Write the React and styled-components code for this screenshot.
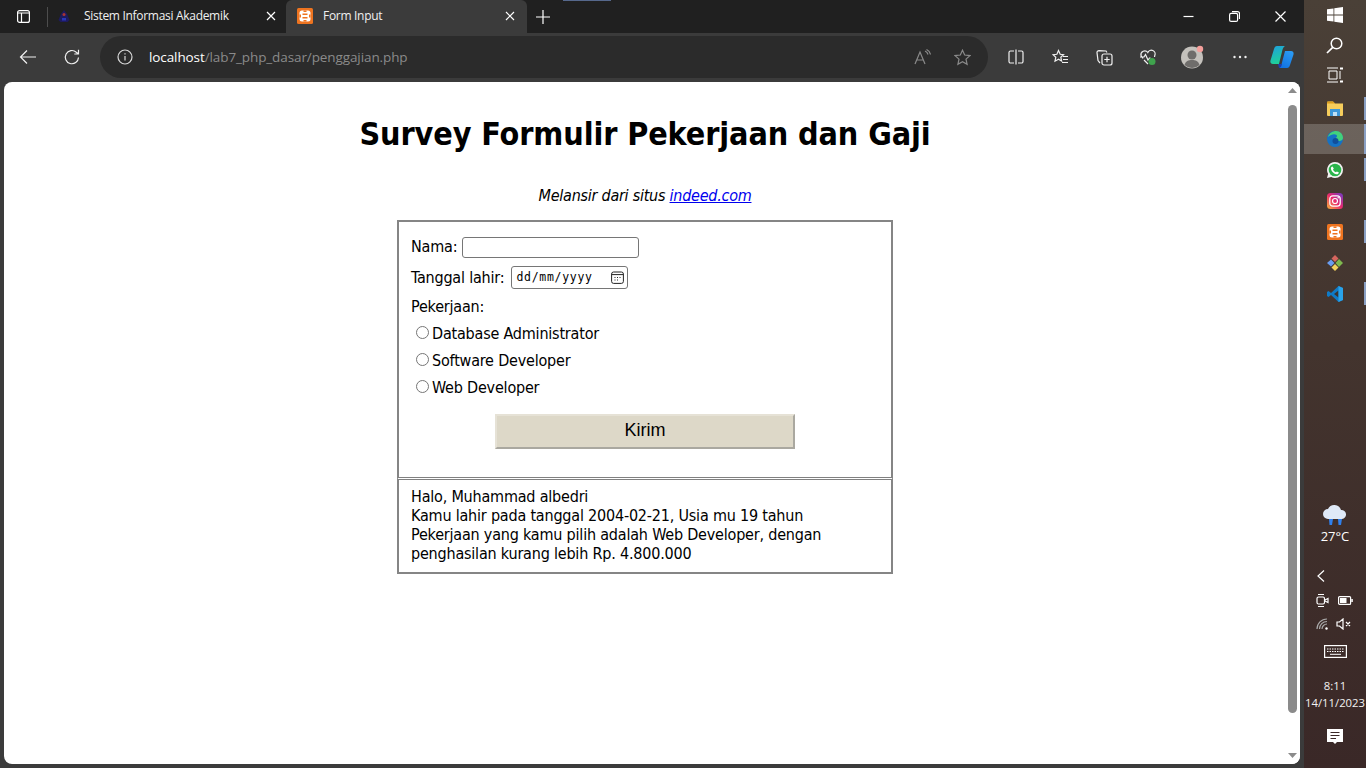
import React from "react";
import styled, { createGlobalStyle } from "styled-components";

const GlobalStyle = createGlobalStyle`
  html, body {
    margin: 0;
    padding: 0;
    height: 100%;
    overflow: hidden;
    background: #3b3b3b;
  }
  * { box-sizing: border-box; }
`;

const Screen = styled.div`
  width: 1366px;
  height: 768px;
  display: flex;
  overflow: hidden;
  font-family: "Open Sans", "Noto Sans", sans-serif;
`;

const Browser = styled.div`
  width: 1304px;
  display: flex;
  flex-direction: column;
  background: #3b3b3b;
`;

/* tab strip */
const TabStrip = styled.div`
  height: 33px;
  display: flex;
  align-items: center;
  background: #202020;
  color: #fff;
  position: relative;
`;

const SideButton = styled.div`
  width: 47px;
  height: 33px;
  padding-left: 17px;
  display: flex;
  align-items: center;
  svg { display: block; }
`;

const TabDivider = styled.div`
  width: 1px;
  height: 20px;
  background: #4d4d4d;
`;

const Tab = styled.div`
  width: ${(p) => p.$w}px;
  height: 33px;
  padding: 0 ${(p) => p.$pr}px 2px ${(p) => p.$pl}px;
  display: flex;
  align-items: center;
  font-size: 12px;
  letter-spacing: -0.3px;
  color: #f0f0f0;
  border-radius: 6px 6px 0 0;
  background: ${(p) => (p.$active ? "#3b3b3b" : "transparent")};
`;

const TabTitle = styled.span`
  margin-left: ${(p) => p.$ml}px;
  flex: 1;
  white-space: nowrap;
`;

const NewTab = styled.div`
  margin-left: 8px;
  display: flex;
`;

const WindowButtons = styled.div`
  margin-left: auto;
  display: flex;
  align-items: center;
  gap: 35px;
  padding-right: 18px;
`;

const TopMark = styled.div`
  position: absolute;
  left: 563px;
  top: 0;
  width: 48px;
  height: 1px;
  background: #56688c;
`;

/* toolbar */
const Toolbar = styled.div`
  height: 49px;
  padding: 0 0 1px 19px;
  display: flex;
  align-items: center;
  background: #3b3b3b;
`;

const NavIcon = styled.div`
  width: ${(p) => p.$w}px;
  flex-shrink: 0;
  display: flex;
  align-items: center;
`;

const AddressBar = styled.div`
  width: 888px;
  height: 42px;
  flex-shrink: 0;
  padding: 0 17px;
  display: flex;
  align-items: center;
  border-radius: 21px;
  background: #2b2b2b;
`;

const Url = styled.div`
  margin-left: 16px;
  flex: 1;
  font-size: 13.5px;
  letter-spacing: -0.1px;
  color: #8a8a8a;
`;

const Host = styled.span`
  color: #fff;
`;

const AddressIcons = styled.div`
  display: flex;
  align-items: center;
  gap: 23px;
`;

const ToolIcons = styled.div`
  display: flex;
  align-items: center;
  margin-left: 6px;
`;

const ToolSlot = styled.div`
  width: ${(p) => p.$w || 44}px;
  display: flex;
  justify-content: center;
`;

/* web page */
const Viewport = styled.div`
  flex: 1;
  margin: 0 4px 4px;
  display: flex;
  overflow: hidden;
  background: #fff;
  border-radius: 8px;
`;

const Page = styled.main`
  flex: 1;
  padding-left: 2px;
  color: #000;
  font-family: "DejaVu Sans", sans-serif;
  font-stretch: condensed;
  font-size: 16px;
  letter-spacing: -0.2px;
  text-align: center;
`;

const Title = styled.h1`
  margin: 33px 0 0;
  font-size: 32px;
  line-height: 39px;
  font-weight: bold;
  letter-spacing: -0.1px;
`;

const Subtitle = styled.p`
  margin: 32px 0 15px;
  font-style: italic;
  line-height: 19px;
  letter-spacing: -0.25px;
  a { color: #0000ee; }
`;

const Panel = styled.section`
  width: 496px;
  margin: 0 auto;
  padding: ${(p) => p.$pad};
  border: 2px solid #858585;
  text-align: left;
`;

const FormPanel = styled(Panel)`
  height: 257px;
  border-bottom: 0;
`;

const ResultPanel = styled(Panel)`
  height: 97px;
  border-top: 3px double #808080;
  line-height: 19px;
`;

const Field = styled.div`
  height: ${(p) => p.$h}px;
  display: flex;
  align-items: center;
`;

const NameField = styled(Field)`
  padding-bottom: 2px;
`;

const RadioRow = styled.label`
  height: 27px;
  padding-left: 5px;
  display: flex;
  align-items: center;
`;

const Radio = styled.span`
  width: 13px;
  height: 13px;
  margin: -2px 3px 0 0;
  border: 1px solid #767676;
  border-radius: 50%;
  background: #fff;
`;

const TextBox = styled.div`
  width: 177px;
  height: 21px;
  margin: 2px 0 0 5px;
  border: 1px solid #767676;
  border-radius: 3px;
`;

const DateBox = styled.div`
  width: 117px;
  height: 23px;
  margin-left: 7px;
  padding: 0 3px 0 4px;
  display: flex;
  align-items: center;
  justify-content: space-between;
  border: 1px solid #767676;
  border-radius: 3px;
  font-family: "DejaVu Sans Mono", monospace;
  font-stretch: normal;
  font-size: 11.5px;
  letter-spacing: 0.7px;
`;

const Submit = styled.button`
  display: block;
  width: 300px;
  height: 35px;
  margin: 13px auto 0;
  padding: 0 0 2px;
  border: 2px solid #e6e2d6;
  border-right-color: #aaa8a0;
  border-bottom-color: #aaa8a0;
  background: #ddd8c8;
  color: #000;
  font-family: "Liberation Sans", sans-serif;
  font-size: 18px;
`;

const Scrollbar = styled.div`
  width: 16px;
  display: flex;
  flex-direction: column;
  align-items: center;
  background: #fff;
`;

const ArrowBox = styled.div`
  height: 17px;
  display: flex;
  align-items: center;
  justify-content: center;
`;

const ThumbTrack = styled.div`
  flex: 1;
  padding: 6px 0 34px;
  display: flex;
`;

const Thumb = styled.div`
  width: 9px;
  background: #8b8b8b;
  border-radius: 5px;
`;

/* taskbar */
const Taskbar = styled.aside`
  width: 62px;
  display: flex;
  flex-direction: column;
  background: linear-gradient(180deg, #4a4037 0%, #43342e 45%, #3a2827 100%);
  color: #fff;
  font-family: "Open Sans", sans-serif;
  font-size: 12px;
  text-align: center;
`;

const SystemSlot = styled.div`
  height: 30px;
  padding-right: 1px;
  display: flex;
  align-items: center;
  justify-content: center;
`;

const AppList = styled.div`
  margin-top: 3px;
`;

const AppSlot = styled.div`
  height: ${(p) => (p.$active ? 30 : 31)}px;
  padding-right: 1px;
  display: flex;
  align-items: center;
  justify-content: center;
  position: relative;
  background: ${(p) => (p.$active ? "rgba(255,255,255,0.2)" : "transparent")};
  &::after {
    content: "";
    display: ${(p) => (p.$running ? "block" : "none")};
    position: absolute;
    right: 0;
    top: ${(p) => (p.$active ? 0 : 4)}px;
    bottom: ${(p) => (p.$active ? 0 : 4)}px;
    width: 2px;
    background: #8aa0c4;
  }
`;

const Weather = styled.div`
  margin-top: 196px;
  display: flex;
  flex-direction: column;
  align-items: center;
  font-size: 13px;
  line-height: 18px;
`;

const Tray = styled.div`
  margin-top: 19px;
  display: flex;
  flex-direction: column;
`;

const TrayRow = styled.div`
  height: 24px;
  padding-left: 12px;
  display: flex;
  align-items: center;
  gap: ${(p) => p.$gap || 0}px;
`;

const KeyboardRow = styled.div`
  height: 24px;
  margin-top: 3px;
  display: flex;
  align-items: center;
  justify-content: center;
`;

const Clock = styled.div`
  margin-top: 14px;
  font-size: 11.3px;
  line-height: 17px;
  color: #f2f2f2;
  white-space: nowrap;
`;

const NotifySlot = styled.div`
  margin-top: 18px;
  display: flex;
  justify-content: center;
`;

const stroke = { fill: "none", stroke: "currentColor", strokeWidth: 1.2 };

const Xampp = ({ size = 16 }) => (
  <svg width={size} height={size} viewBox="0 0 16 16">
    <rect width="16" height="16" rx="1.500" fill="#ee7420" />
    <rect x="2.500" y="2.500" width="11" height="11" rx="2.500" fill="#fff" />
    <path d="M6.500 2.500h3v1.500h-3zM6.500 12h3v1.500h-3zM2.500 6.500H4v3H2.500zM12 6.500h1.500v3H12z" fill="#ee7420" />
    <path d="M5.500 5.500h5v1.500h-5zM5.500 9h5v1.500h-5z" fill="#ee7420" />
  </svg>
);

export default function App() {
  return (
    <Screen>
      <GlobalStyle />
      <Browser>
        <TabStrip>
          <TopMark />
          <SideButton>
            <svg width="13" height="13" viewBox="0 0 13 13" color="#fff">
              <rect x="0.6" y="0.6" width="11.8" height="11.8" rx="2" {...stroke} />
              <path d="M1 3h11M4.500 3v9" {...stroke} />
            </svg>
          </SideButton>
          <TabDivider />
          <Tab $w={238} $pl={10} $pr={10}>
            <svg width="12" height="14" viewBox="0 0 12 14">
              <path d="M6 1l3 4 2.500 6-2 2H2.500l-2-2 2.500-6z" fill="#1d1b5e" />
              <circle cx="6" cy="5.500" r="1.500" fill="#a33" />
              <rect x="4" y="9" width="4" height="2.500" fill="#2a35b8" />
            </svg>
            <TabTitle $ml={14}>Sistem Informasi Akademik</TabTitle>
            <svg width="10" height="10" viewBox="0 0 10 10" color="#fff">
              <path d="M1 1l8 8M9 1l-8 8" {...stroke} />
            </svg>
          </Tab>
          <Tab $w={241} $pl={11} $pr={12} $active>
            <Xampp />
            <TabTitle $ml={10}>Form Input</TabTitle>
            <svg width="10" height="10" viewBox="0 0 10 10" color="#fff">
              <path d="M1 1l8 8M9 1l-8 8" {...stroke} />
            </svg>
          </Tab>
          <NewTab>
            <svg width="16" height="16" viewBox="0 0 16 16" color="#fff">
              <path d="M8 1v14M1 8h14" {...stroke} />
            </svg>
          </NewTab>
          <WindowButtons>
            <svg width="11" height="11" viewBox="0 0 11 11" color="#fff">
              <path d="M0.500 5.500h10" {...stroke} />
            </svg>
            <svg width="11" height="11" viewBox="0 0 11 11" color="#fff">
              <rect x="0.600" y="2.400" width="8" height="8" rx="1.500" {...stroke} />
              <path d="M3 0.600h5.500a2 2 0 0 1 2 2V8" {...stroke} />
            </svg>
            <svg width="11" height="11" viewBox="0 0 11 11" color="#fff">
              <path d="M0.500 0.500l10 10M10.500 0.500l-10 10" {...stroke} />
            </svg>
          </WindowButtons>
        </TabStrip>

        <Toolbar>
          <NavIcon $w={44}>
            <svg width="18" height="16" viewBox="0 0 18 16" color="#f0f0f0">
              <path d="M17 8H1.500M8 1.500L1.500 8 8 14.500" {...stroke} />
            </svg>
          </NavIcon>
          <NavIcon $w={37}>
            <svg width="18" height="18" viewBox="0 0 18 18" color="#f0f0f0">
              <path d="M15.500 9.500a6.600 6.600 0 1 1-2.200-5.300L15.500 6M15.500 1.800V6h-4.200" {...stroke} />
            </svg>
          </NavIcon>
          <AddressBar>
            <svg width="16" height="16" viewBox="0 0 16 16" color="#d8d8d8">
              <circle cx="8" cy="8" r="7" {...stroke} />
              <path d="M8 7v4.500M8 4.300v1.300" {...stroke} />
            </svg>
            <Url>
              <Host>localhost</Host>/lab7_php_dasar/penggajian.php
            </Url>
            <AddressIcons>
              <svg width="17" height="16" viewBox="0 0 17 16" color="#8a8a8a">
                <path d="M1 15L6 3l5 12M2.800 11h6.400M11 2a5 5 0 0 1 3 3.500M12.500 0.500a7 7 0 0 1 4 5" {...stroke} />
              </svg>
              <svg width="17" height="17" viewBox="0 0 17 17" color="#8a8a8a">
                <path d="M8.500 1.200l2.200 4.800 5.200.6-3.900 3.500 1.100 5.200-4.600-2.600-4.600 2.600 1.100-5.200L1.100 6.600l5.200-.6z" {...stroke} />
              </svg>
            </AddressIcons>
          </AddressBar>
          <ToolIcons>
            <ToolSlot>
              <svg width="16" height="16" viewBox="0 0 16 16" color="#f0f0f0">
                <path d="M6 2H2.500A1.500 1.500 0 0 0 1 3.500v9A1.500 1.500 0 0 0 2.500 14H6M10 2h3.500A1.500 1.500 0 0 1 15 3.500v9a1.500 1.500 0 0 1-1.500 1.500H10M8 0.500v15" {...stroke} />
              </svg>
            </ToolSlot>
            <ToolSlot>
              <svg width="17" height="17" viewBox="0 0 17 17" color="#f0f0f0">
                <path d="M6.500 1.500l1.700 3.800 3.300.4-2.700 2.500.8 3.800-3.100-1.800-3.500 2 .8-4-2.700-2.500 3.800-.4zM11 7.500h5M11 10.500h5M10 13.500h6" {...stroke} />
              </svg>
            </ToolSlot>
            <ToolSlot>
              <svg width="17" height="17" viewBox="0 0 17 17" color="#f0f0f0">
                <rect x="6" y="5" width="10" height="11" rx="2" {...stroke} />
                <path d="M11 7.800v5.400M8.300 10.500h5.400M11 3.500L10 2 3 1.600a2 2 0 0 0-2 2l1 8 2 2.400" {...stroke} />
              </svg>
            </ToolSlot>
            <ToolSlot>
              <svg width="18" height="18" viewBox="0 0 18 18" color="#f0f0f0">
                <path d="M4 10.500L2 7.500a3.800 3.800 0 0 1 6.800-3 3.800 3.800 0 0 1 7 3L15.500 9M1 9h4l1.500-2.500L9 12l1.500-2h1M5 12l4 4" {...stroke} />
                <circle cx="13" cy="13.500" r="3.500" fill="#3fa34d" />
              </svg>
            </ToolSlot>
            <ToolSlot>
              <svg width="24" height="24" viewBox="0 0 24 24">
                <circle cx="12" cy="12.500" r="11" fill="#c4c1bc" />
                <circle cx="12" cy="10" r="4.500" fill="#6f6d6b" />
                <path d="M4.500 20c1-4 4-5 7.500-5s6.500 1 7.500 5a11 11 0 0 1-15 0z" fill="#6f6d6b" />
                <circle cx="20" cy="4" r="3.200" fill="#f4a09c" />
              </svg>
            </ToolSlot>
            <ToolSlot $w={52}>
              <svg width="16" height="4" viewBox="0 0 16 4">
                <circle cx="2.500" cy="2" r="1.200" fill="#f0f0f0" />
                <circle cx="8" cy="2" r="1.200" fill="#f0f0f0" />
                <circle cx="13.500" cy="2" r="1.200" fill="#f0f0f0" />
              </svg>
            </ToolSlot>
            <ToolSlot $w={32}>
              <svg width="24" height="24" viewBox="0 0 24 24">
                <defs>
                  <linearGradient id="copilotA" x1="0" y1="0" x2="0.300" y2="1">
                    <stop offset="0" stopColor="#1f9fe0" />
                    <stop offset="1" stopColor="#1fcf9a" />
                  </linearGradient>
                  <linearGradient id="copilotB" x1="0.800" y1="0" x2="0.300" y2="1">
                    <stop offset="0" stopColor="#2b9cf5" />
                    <stop offset="1" stopColor="#1273e0" />
                  </linearGradient>
                </defs>
                <path d="M7 1h8c-1.500 1-2 2-2.600 4L9 19H3C1 19 0 17.500.5 15.500L4 4c.5-2 1.500-3 3-3z" fill="url(#copilotA)" />
                <path d="M17 23H9c1.500-1 2-2 2.600-4L15 6h6c2 0 3 1.500 2.500 3.500L20 20c-.5 2-1.500 3-3 3z" fill="url(#copilotB)" />
                <path d="M8 19h4l-1 3-2 1z" fill="#1c3fb0" />
              </svg>
            </ToolSlot>
          </ToolIcons>
        </Toolbar>

        <Viewport>
          <Page>
            <Title>Survey Formulir Pekerjaan dan Gaji</Title>
            <Subtitle>
              Melansir dari situs <a href="#indeed">indeed.com</a>
            </Subtitle>
            <FormPanel $pad="10px 12px 0">
              <NameField $h={30}>
                Nama:
                <TextBox />
              </NameField>
              <Field $h={30}>
                Tanggal lahir:
                <DateBox>
                  dd/mm/yyyy
                  <svg width="13" height="13" viewBox="0 0 13 13" color="#222">
                    <rect x="0.600" y="1" width="11.800" height="11.400" rx="2" fill="none" stroke="currentColor" />
                    <path d="M1 3.600h11M3.500 6.500h1M6 6.500h1M8.500 6.500h1M3.500 9h1M6 9h1" fill="none" stroke="currentColor" />
                  </svg>
                </DateBox>
              </Field>
              <Field $h={28}>Pekerjaan:</Field>
              <RadioRow>
                <Radio />
                Database Administrator
              </RadioRow>
              <RadioRow>
                <Radio />
                Software Developer
              </RadioRow>
              <RadioRow>
                <Radio />
                Web Developer
              </RadioRow>
              <Submit>Kirim</Submit>
            </FormPanel>
            <ResultPanel $pad="7px 12px 0">
              Halo, Muhammad albedri
              <br />
              Kamu lahir pada tanggal 2004-02-21, Usia mu 19 tahun
              <br />
              Pekerjaan yang kamu pilih adalah Web Developer, dengan penghasilan kurang lebih Rp. 4.800.000
            </ResultPanel>
          </Page>
          <Scrollbar>
            <ArrowBox>
              <svg width="9" height="5" viewBox="0 0 9 5">
                <path d="M4.500 0L9 5H0z" fill="#8b8b8b" />
              </svg>
            </ArrowBox>
            <ThumbTrack>
              <Thumb />
            </ThumbTrack>
            <ArrowBox>
              <svg width="9" height="5" viewBox="0 0 9 5">
                <path d="M0 0h9L4.500 5z" fill="#8b8b8b" />
              </svg>
            </ArrowBox>
          </Scrollbar>
        </Viewport>
      </Browser>

      <Taskbar>
        <SystemSlot>
          <svg width="16" height="16" viewBox="0 0 16 16">
            <path d="M0 2.300l6.500-.9v6.200H0zM7.300 1.300L16 0v7.600H7.300zM0 8.400h6.500v6.200L0 13.700zM7.300 8.400H16V16l-8.700-1.300z" fill="#fff" />
          </svg>
        </SystemSlot>
        <SystemSlot>
          <svg width="17" height="17" viewBox="0 0 17 17" color="#fff">
            <circle cx="10.500" cy="6.500" r="5.300" fill="none" stroke="currentColor" strokeWidth="1.500" />
            <path d="M6.700 10.300L1 16" fill="none" stroke="currentColor" strokeWidth="1.700" />
          </svg>
        </SystemSlot>
        <SystemSlot>
          <svg width="16" height="16" viewBox="0 0 16 16" color="#fff">
            <path d="M0 1h11M0 15h11M2 4h8v8H2zM13 4v8" fill="none" stroke="currentColor" />
            <rect x="13" y="0.500" width="3" height="2" fill="#fff" />
            <rect x="13" y="13.500" width="3" height="2" fill="#fff" />
          </svg>
        </SystemSlot>
        <AppList>
          <AppSlot $running>
            <svg width="16" height="15" viewBox="0 0 16 15">
              <path d="M0 1.500A1 1 0 0 1 1 .5h5l2 2h8V14a1 1 0 0 1-1 1H1a1 1 0 0 1-1-1z" fill="#f6cd5c" />
              <path d="M0 1.500A1 1 0 0 1 1 .5h5l2 2H0z" fill="#d99c1c" />
              <path d="M3 8h10v7H3z" fill="#3c97d9" />
              <path d="M6 11h4v4H6z" fill="#bfe0f5" />
            </svg>
          </AppSlot>
          <AppSlot $running $active>
            <svg width="16" height="16" viewBox="0 0 16 16">
              <circle cx="8" cy="8" r="8" fill="#1572c4" />
              <path d="M1 6c1-4 5-6 8-6 4 0 7 3 7 7 0 2-2 3-4 3H7c0-3 3-3 3-5S5 2 1 6z" fill="#42d17c" />
              <circle cx="8.500" cy="10" r="3" fill="#114f9a" />
            </svg>
          </AppSlot>
          <AppSlot $running>
            <svg width="16" height="16" viewBox="0 0 16 16">
              <path d="M8 0a8 8 0 0 1 0 16c-1.400 0-2.700-.4-3.800-1L0 16l1.100-4A8 8 0 0 1 8 0z" fill="#f2f2f2" />
              <circle cx="8" cy="8" r="6.300" fill="#2ab54b" />
              <path d="M5.500 4.500l1.300 2-.8 1c.6 1.300 1.500 2.200 2.900 2.800l1-.9 2 1.200c-.2 1.400-1.500 1.900-2.600 1.700C6.500 11.800 4 9 3.900 6.300c0-.8.600-1.700 1.600-1.800z" fill="#fff" />
            </svg>
          </AppSlot>
          <AppSlot>
            <svg width="16" height="16" viewBox="0 0 16 16">
              <defs>
                <linearGradient id="ig" x1="0" y1="1" x2="1" y2="0">
                  <stop offset="0" stopColor="#f9b43a" />
                  <stop offset="0.5" stopColor="#e8296d" />
                  <stop offset="1" stopColor="#6a3bc8" />
                </linearGradient>
              </defs>
              <rect width="16" height="16" rx="3.500" fill="url(#ig)" />
              <rect x="2.800" y="2.800" width="10.400" height="10.400" rx="3" fill="none" stroke="#fff" strokeWidth="1.200" />
              <circle cx="8" cy="8" r="2.500" fill="none" stroke="#fff" strokeWidth="1.200" />
              <circle cx="11.200" cy="4.800" r="0.800" fill="#fff" />
            </svg>
          </AppSlot>
          <AppSlot $running>
            <Xampp />
          </AppSlot>
          <AppSlot>
            <svg width="16" height="16" viewBox="0 0 16 16">
              <path d="M8 0l3.500 3.500L8 7 4.500 3.500z" fill="#d6665e" />
              <path d="M12 4l4 4-4 4-3.500-4z" fill="#7fb94e" />
              <path d="M4 4.500L7.500 8 4 11.500 0 8z" fill="#6a9df0" />
              <path d="M8 9l3.500 3.500L8 16l-3.500-3.500z" fill="#f2d25c" />
            </svg>
          </AppSlot>
          <AppSlot $running>
            <svg width="16" height="16" viewBox="0 0 16 16">
              <path d="M11.500 0L16 2v12l-4.500 2L4 9l-2.500 2L0 10V6l1.500-1L4 7z" fill="#0f7ac6" />
              <path d="M11.500 4.500L7 8l4.500 3.500z" fill="#3b3330" />
              <path d="M11.500 0L16 2v12l-4.500 2z" fill="#29a3ea" />
            </svg>
          </AppSlot>
        </AppList>
        <Weather>
          <svg width="26" height="22" viewBox="0 0 26 22">
            <path d="M6 14a5 5 0 0 1 0-10 7 7 0 0 1 13 1 4.500 4.500 0 0 1 1 9z" fill="#dfe9f7" />
            <path d="M7 14h4l-1 6H7.500zM16 14h4l-1 6h-2.500z" fill="#2f80ec" />
          </svg>
          27°C
        </Weather>
        <Tray>
          <TrayRow>
            <svg width="10" height="14" viewBox="0 0 10 14" color="#fff">
              <path d="M8 1.500L2 7l6 5.500" {...stroke} />
            </svg>
          </TrayRow>
          <TrayRow $gap={9}>
            <svg width="13" height="15" viewBox="0 0 13 15" color="#fff">
              <path d="M2 1.500h6M2 13.500h6" {...stroke} />
              <rect x="1" y="4" width="7.500" height="7" rx="1.500" {...stroke} />
              <path d="M9 7l3-1.500v4L9 8" {...stroke} />
            </svg>
            <svg width="15" height="9" viewBox="0 0 15 9" color="#fff">
              <rect x="0.600" y="0.600" width="12" height="7.800" rx="1" {...stroke} />
              <rect x="2" y="2" width="6.500" height="5" fill="#fff" />
              <rect x="13.300" y="3" width="1.500" height="3" fill="#fff" />
            </svg>
          </TrayRow>
          <TrayRow $gap={7}>
            <svg width="13" height="12" viewBox="0 0 13 12" color="#aaa">
              <path d="M1 11a10 10 0 0 1 10-10M3.500 11A7.500 7.500 0 0 1 11 3.500M6 11a5 5 0 0 1 5-5" {...stroke} />
              <circle cx="10.500" cy="10.500" r="1.200" fill="#fff" />
            </svg>
            <svg width="15" height="12" viewBox="0 0 15 12" color="#fff">
              <path d="M1 4h2.500L7 1v10L3.500 8H1zM10 4l4 4M14 4l-4 4" {...stroke} />
            </svg>
          </TrayRow>
          <KeyboardRow>
            <svg width="23" height="13" viewBox="0 0 23 13" color="#fff">
              <rect x="0.600" y="0.600" width="21.800" height="11.800" {...stroke} />
              <path d="M3 4h17M3 6.500h17" stroke="#fff" strokeDasharray="1.500 1" fill="none" />
              <path d="M6 9.300h11" stroke="#fff" fill="none" />
            </svg>
          </KeyboardRow>
        </Tray>
        <Clock>
          8:11
          <br />
          14/11/2023
        </Clock>
        <NotifySlot>
          <svg width="16" height="16" viewBox="0 0 16 16">
            <path d="M0 0h16v13h-6l-2 2-2-2H0z" fill="#fff" />
            <path d="M3.500 3.500h9M3.500 6.500h9M3.500 9.500h5.500" stroke="#3a2827" fill="none" />
          </svg>
        </NotifySlot>
      </Taskbar>
    </Screen>
  );
}
